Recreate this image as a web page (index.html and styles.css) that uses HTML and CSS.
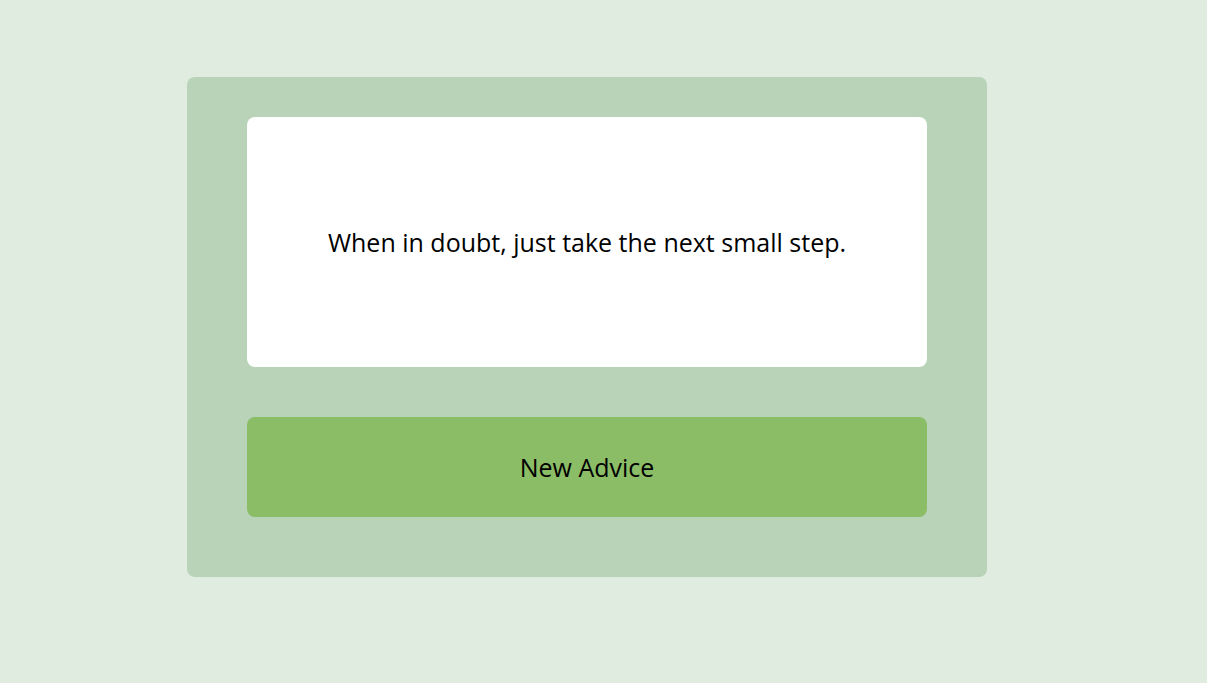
FILE: index.html
```html
<!DOCTYPE html>
<html lang="en">
<head>
<meta charset="utf-8">
<title>Advice</title>
<link rel="stylesheet" href="styles.css">
</head>
<body>
<main class="page">
  <section class="card">
    <div class="advice">
      <p class="advice-text">When in doubt, just take the next small step.</p>
    </div>
    <button class="new-btn" type="button">New Advice</button>
  </section>
</main>
</body>
</html>
```
FILE: styles.css
```css
html, body {
  margin: 0;
  padding: 0;
  background: #e1ece1;
  font-family: "Open Sans", "Liberation Sans", sans-serif;
  color: #000;
}
.page {
  padding: 77px 0 0 187px;
}
.card {
  width: 800px;
  height: 500px;
  box-sizing: border-box;
  background: #b8d3b8;
  border-radius: 8px;
  padding: 40px 60px 60px;
  display: flex;
  flex-direction: column;
  gap: 50px;
}
.advice {
  height: 250px;
  background: #ffffff;
  border-radius: 8px;
  display: flex;
  align-items: center;
  justify-content: center;
}
.advice-text {
  margin: 0;
  font-size: 25px;
  line-height: 1.4;
}
.new-btn {
  height: 100px;
  border: none;
  border-radius: 8px;
  background: #8bbd66;
  font-family: inherit;
  font-size: 25px;
  color: #000;
  padding: 0;
  cursor: pointer;
}
```
